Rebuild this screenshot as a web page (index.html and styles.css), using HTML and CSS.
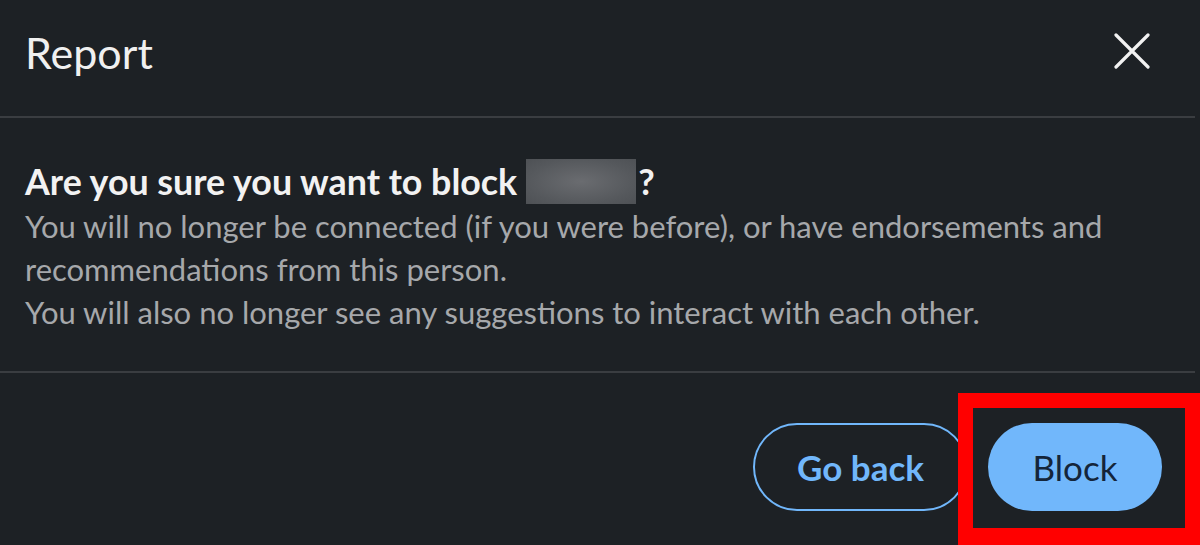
FILE: index.html
```html
<!DOCTYPE html>
<html>
<head>
<meta charset="utf-8">
<link rel="stylesheet" href="styles.css">
</head>
<body>
<div class="modal">
  <header class="modal-header">
    <h2 class="title">Report</h2>
    <button class="close" aria-label="Close">
      <svg width="36" height="36" viewBox="0 0 36 36"><path d="M2 2 L34 34 M34 2 L2 34" stroke="#f2f2f2" stroke-width="3.2" stroke-linecap="round"/></svg>
    </button>
  </header>
  <section class="modal-body">
    <h3 class="question">Are you sure you want to block <span class="blur"></span>?</h3>
    <p class="desc">You will no longer be connected (if you were before), or have endorsements and recommendations from this person.</p>
    <p class="desc">You will also no longer see any suggestions to interact with each other.</p>
  </section>
  <footer class="modal-footer">
    <button class="btn btn-secondary">Go back</button>
    <button class="btn btn-primary">Block</button>
  </footer>
  <div class="highlight"></div>
</div>
</body>
</html>
```
FILE: styles.css
```css
html, body {
  margin: 0;
  padding: 0;
  background: #1d2125;
}
body {
  width: 1200px;
  height: 545px;
  overflow: hidden;
  font-family: "Lato", "Open Sans", sans-serif;
}
.modal {
  position: relative;
  width: 1200px;
  height: 545px;
  background: #1d2125;
}
.modal-header {
  height: 116px;
  display: flex;
  align-items: center;
  justify-content: space-between;
  padding: 0 45px 0 25px;
  border-bottom: 2px solid #3a3d41;
  margin-right: 5px;
}
.title {
  margin: 0;
  font-size: 43px;
  font-weight: 400;
  color: #f0f0f0;
  margin-top: -12px;
}
.close {
  background: none;
  border: 0;
  padding: 0;
  width: 36px;
  height: 36px;
  margin-top: -14px;
}
.close svg { display: block; }
.modal-body {
  padding: 41px 25px 37px;
  border-bottom: 2px solid #3a3d41;
  margin-right: 5px;
}
.question {
  margin: 0 0 1px;
  font-size: 35.8px;
  font-weight: 700;
  color: #f2f2f2;
  line-height: 41px;
  display: flex;
  align-items: center;
}
.blur {
  display: inline-block;
  width: 110px;
  height: 45px;
  margin: 0 2px 0 9px;
  background: radial-gradient(ellipse at center, #6a6c70 0%, #55585c 70%, #4e5155 100%);
}
.desc {
  margin: 0;
  font-size: 31px;
  line-height: 43px;
  color: #a6a8ab;
}
.modal-footer {
  display: flex;
  justify-content: flex-end;
  gap: 20px;
  padding: 50px 38px 0 0;
}
.btn {
  height: 88px;
  border-radius: 44px;
  font-family: inherit;
  font-size: 35px;
  cursor: pointer;
}
.btn-secondary {
  width: 215px;
  background: transparent;
  border: 2px solid #71b7fb;
  color: #71b7fb;
  font-weight: 700;
}
.btn-primary {
  width: 174px;
  background: #71b7fb;
  border: 0;
  color: #14253a;
  font-weight: 400;
}
.highlight {
  position: absolute;
  left: 958px;
  top: 393px;
  width: 242px;
  height: 152px;
  box-sizing: border-box;
  border: 15px solid #ff0000;
  border-bottom-width: 17px;
}
```
